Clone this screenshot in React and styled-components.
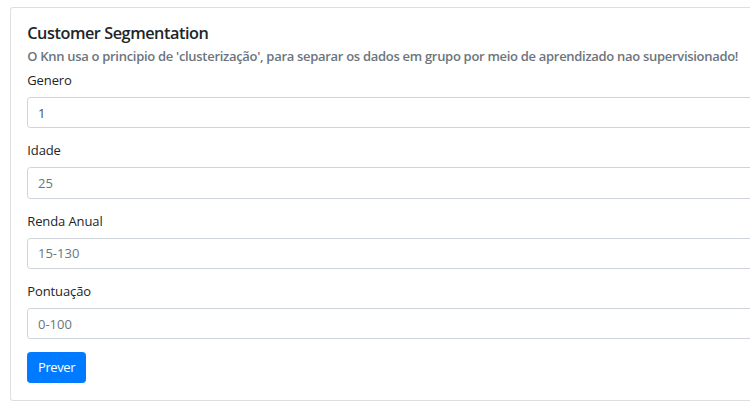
import React from 'react'
import styled, { createGlobalStyle } from 'styled-components'

const GlobalStyle = createGlobalStyle`
  html, body {
    margin: 0;
    padding: 0;
    background: #fff;
    overflow: hidden;
  }
  body {
    font-family: "Open Sans", "Noto Sans", "Liberation Sans", sans-serif;
    font-size: 13px;
    line-height: 1.5;
    color: #212529;
  }
  * { box-sizing: border-box; }
`

const fields = [
  { label: 'Genero', value: '1' },
  { label: 'Idade', placeholder: '25' },
  { label: 'Renda Anual', placeholder: '15-130' },
  { label: 'Pontuação', placeholder: '0-100' },
]

const App = () => {
  return (
    <>
      <GlobalStyle />
      <Page>
        <Card>
          <CardBody>
            <Title>Customer Segmentation</Title>
            <Subtitle>
              O Knn usa o principio de 'clusterização', para separar os dados em grupo por meio de aprendizado nao supervisionado!
            </Subtitle>
            <Form onSubmit={e => e.preventDefault()}>
              {fields.map(f => (
                <FormGroup key={f.label}>
                  <Label>{f.label}</Label>
                  <Input
                    type="text"
                    defaultValue={f.value}
                    placeholder={f.placeholder}
                  />
                </FormGroup>
              ))}
              <Button type="submit">Prever</Button>
            </Form>
          </CardBody>
        </Card>
      </Page>
    </>
  )
}

const Page = styled.div`
  padding: 7px 0 0 10px;
  width: 900px;
`
const Card = styled.div`
  width: 820px;
  background: #fff;
  border: 1px solid rgba(0, 0, 0, 0.125);
  border-radius: 3.25px;
`
const CardBody = styled.div`
  padding: 16.25px;
`
const Title = styled.h5`
  margin: 0 0 9.75px;
  font-size: 16.25px;
  font-weight: 600;
  line-height: 1.2;
  color: #212529;
  letter-spacing: -0.45px;
`
const Subtitle = styled.h6`
  margin: -4.875px 0 0;
  font-size: 13px;
  font-weight: 600;
  line-height: 1.2;
  color: #6c757d;
  letter-spacing: -0.3px;
  white-space: nowrap;
`
const Form = styled.form`
  padding-top: 7px;
`
const FormGroup = styled.div`
  margin-bottom: 13px;
`
const Label = styled.label`
  display: inline-block;
  margin-bottom: 6.5px;
  line-height: 19.5px;
  letter-spacing: -0.1px;
`
const Input = styled.input`
  display: block;
  width: 100%;
  height: 31.25px;
  padding: 4.875px 9.75px;
  font-family: inherit;
  font-size: 13px;
  line-height: 1.5;
  color: #495057;
  background: #fff;
  border: 1px solid #ced4da;
  border-radius: 3.25px;
  outline: none;

  &::placeholder {
    color: #6c757d;
    opacity: 1;
  }
`
const Button = styled.button`
  display: inline-block;
  height: 31.25px;
  padding: 4.875px 9.75px;
  font-family: inherit;
  font-size: 13px;
  line-height: 1.5;
  letter-spacing: -0.4px;
  color: #fff;
  background: #007bff;
  border: 1px solid #007bff;
  border-radius: 3.25px;
  cursor: pointer;
`

export default App
